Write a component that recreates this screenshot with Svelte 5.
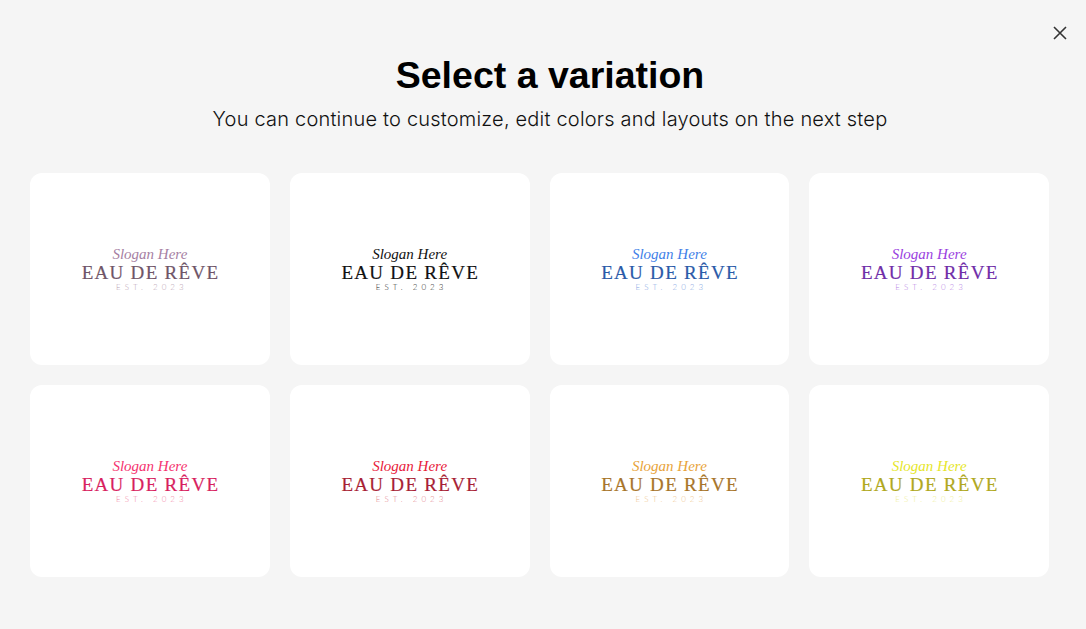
<script>
  const variations = [
    { slogan: '#a67fa3', name: '#6f5568', est: '#b8a0b2' },
    { slogan: '#111111', name: '#111111', est: '#222222' },
    { slogan: '#3f7fe8', name: '#2a5aa8', est: '#7fa4e2' },
    { slogan: '#9a3fe0', name: '#6f2da8', est: '#b67fe4' },
    { slogan: '#f5336f', name: '#d81f5f', est: '#f27fa3' },
    { slogan: '#e8203a', name: '#a81f35', est: '#e47f8c' },
    { slogan: '#e8a33a', name: '#a8752a', est: '#eec48a' },
    { slogan: '#e6e62a', name: '#b0a820', est: '#eeee90' }
  ];
</script>

<div class="page">
  <button class="close" aria-label="Close">
    <svg width="16" height="16" viewBox="0 0 16 16" fill="none" stroke="#333" stroke-width="1.6">
      <path d="M2 2 L14 14 M14 2 L2 14" />
    </svg>
  </button>

  <header>
    <h1>Select a variation</h1>
    <p class="sub">You can continue to customize, edit colors and layouts on the next step</p>
  </header>

  <div class="grid">
    {#each variations as v}
      <div class="card">
        <span class="slogan" style="color: {v.slogan}">Slogan Here</span>
        <span class="name" style="color: {v.name}">EAU DE RÊVE</span>
        <span class="est" style="color: {v.est}">EST. 2023</span>
      </div>
    {/each}
  </div>
</div>

<style>
  :global(body) {
    background: #f5f5f5;
  }

  .page {
    position: relative;
    height: 629px;
    overflow: hidden;
    box-sizing: border-box;
    padding: 53px 37px 0 30px;
    background: #f5f5f5;
    font-family: Inter, sans-serif;
  }

  .close {
    position: absolute;
    top: 25px;
    left: 1052px;
    width: 16px;
    height: 16px;
    padding: 0;
    border: none;
    background: none;
    display: flex;
  }

  header {
    margin-right: -21px;
    text-align: center;
  }

  h1 {
    margin: 0;
    font-family: "Liberation Sans", Arial, sans-serif;
    font-size: 37.5px;
    line-height: 44px;
    font-weight: 700;
    color: #000;
  }

  .sub {
    margin: 8px 0 0;
    font-size: 20px;
    line-height: 28px;
    font-weight: 300;
    letter-spacing: 0.2px;
    color: #111;
  }

  .grid {
    display: grid;
    grid-template-columns: repeat(4, 1fr);
    grid-auto-rows: 192px;
    gap: 20px;
    margin-top: 40px;
  }

  .card {
    background: #fff;
    border-radius: 12px;
    display: flex;
    flex-direction: column;
    align-items: center;
    justify-content: center;
  }

  .slogan {
    font-family: "Liberation Serif", serif;
    font-style: italic;
    font-size: 15px;
    line-height: 16px;
    margin-bottom: 1px;
  }

  .name {
    font-family: "Liberation Serif", serif;
    font-size: 19px;
    line-height: 20px;
    letter-spacing: 1.3px;
    padding-left: 1.3px;
    -webkit-text-stroke: 0.2px currentColor;
  }

  .est {
    font-family: Lato, sans-serif;
    font-size: 8px;
    font-weight: 300;
    line-height: 9px;
    letter-spacing: 4px;
    padding-left: 4px;
  }
</style>
